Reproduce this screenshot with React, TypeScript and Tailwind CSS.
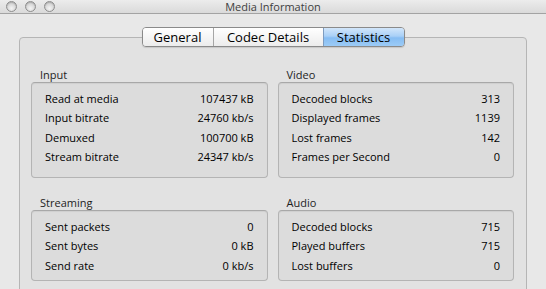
import React from "react";

type Row = [string, string];

function Group({ title, rows, h }: { title: string; rows: Row[]; h: string }) {
  return (
    <div className="flex flex-col">
      <div className="h-[14px] pl-[9px] text-[11px] leading-[14px] text-[#1e1e1e]">{title}</div>
      <div
        className={`${h} rounded-[4px] border border-[#b4b4b4] border-t-[#a8a8a8] bg-[#dcdcdc] px-[13px] pt-[6px] shadow-[inset_0_1px_1px_rgba(0,0,0,0.06)]`}
      >
        {rows.map(([k, v]) => (
          <div key={k} className="flex h-[19.6px] items-center justify-between text-[11px] text-[#000]">
            <span>{k}</span>
            <span>{v}</span>
          </div>
        ))}
      </div>
    </div>
  );
}

function Light() {
  return (
    <div className="h-[11px] w-[11px] rounded-full border border-[#8e8e8e] bg-[radial-gradient(circle_at_50%_70%,#f4f4f4_0%,#d8d8d8_55%,#bdbdbd_100%)] shadow-[inset_0_1px_1px_rgba(0,0,0,0.15)]" />
  );
}

export default function App() {
  return (
    <div
      className="relative h-[289px] w-[546px] overflow-hidden bg-[#e8e8e8]"
      style={{ fontFamily: '"Open Sans", "DejaVu Sans", sans-serif' }}
    >
      {/* title bar */}
      <div className="relative flex h-[14px] items-center border-b border-[#a3a3a3] bg-gradient-to-b from-[#ececec] to-[#dadada]">
        <div className="flex items-center gap-[8px] pl-[6px]">
          <Light />
          <Light />
          <Light />
        </div>
        <div className="absolute inset-0 flex items-center justify-center text-[11px] leading-none text-[#404040]">
          Media Information
        </div>
      </div>

      <div className="px-[19px] pt-[13px]">
        {/* tabs */}
        <div className="relative z-10 -mb-[10px] flex justify-center">
          <div className="flex h-[20px] overflow-hidden rounded-[4px] border border-[#8a8a8a] text-[13px] leading-none text-[#000] shadow-[0_1px_1px_rgba(0,0,0,0.12)]">
            <div className="flex w-[71px] items-center justify-center border-r border-[#a6a6a6] bg-gradient-to-b from-[#ffffff] to-[#ececec]">
              General
            </div>
            <div className="flex w-[110px] items-center justify-center border-r border-[#7e9cc0] bg-gradient-to-b from-[#ffffff] to-[#ececec]">
              Codec Details
            </div>
            <div className="flex w-[80px] items-center justify-center bg-[linear-gradient(to_bottom,#d2e6fb_0%,#a9d0f7_45%,#86bdf3_55%,#9ccbf6_100%)]">
              Statistics
            </div>
          </div>
        </div>

        {/* panel */}
        <div className="h-[300px] rounded-[4px] border border-[#b5b5b5] bg-[#e2e2e2] pl-[11px] pr-[12px] pt-[30px]">
          <div className="grid grid-cols-2 gap-x-[10px] gap-y-[18px]">
            <Group
              title="Input"
              h="h-[96px]"
              rows={[
                ["Read at media", "107437 kB"],
                ["Input bitrate", "24760 kb/s"],
                ["Demuxed", "100700 kB"],
                ["Stream bitrate", "24347 kb/s"],
              ]}
            />
            <Group
              title="Video"
              h="h-[96px]"
              rows={[
                ["Decoded blocks", "313"],
                ["Displayed frames", "1139"],
                ["Lost frames", "142"],
                ["Frames per Second", "0"],
              ]}
            />
            <Group
              title="Streaming"
              h="h-[71px]"
              rows={[
                ["Sent packets", "0"],
                ["Sent bytes", "0 kB"],
                ["Send rate", "0 kb/s"],
              ]}
            />
            <Group
              title="Audio"
              h="h-[71px]"
              rows={[
                ["Decoded blocks", "715"],
                ["Played buffers", "715"],
                ["Lost buffers", "0"],
              ]}
            />
          </div>
        </div>
      </div>
    </div>
  );
}
